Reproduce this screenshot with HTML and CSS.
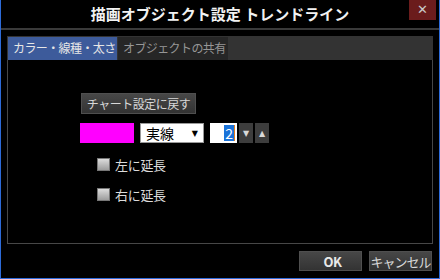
FILE: index.html
```html
<!DOCTYPE html>
<html>
<head>
  <meta charset="UTF-8">
  <title>描画オブジェクト設定 トレンドライン</title>
  <link rel="stylesheet" href="styles.css">
</head>
<body>
  <div class="window">
    <div class="titlebar">
      <span class="title">描画オブジェクト設定 トレンドライン</span>
      <button class="close">&#x2715;</button>
    </div>

    <div class="tabs">
      <div class="tab active">カラー・線種・太さ</div>
      <div class="tab">オブジェクトの共有</div>
    </div>

    <div class="panel">
      <button class="btn reset">チャート設定に戻す</button>

      <div class="line-row">
        <div class="swatch"></div>
        <div class="select">
          <span>実線</span>
          <span class="caret">&#9660;</span>
        </div>
        <div class="number"><span class="sel">2</span><span class="cursor"></span></div>
        <button class="spin">&#9660;</button>
        <button class="spin">&#9650;</button>
      </div>

      <label class="check"><span class="box"></span>左に延長</label>
      <label class="check"><span class="box"></span>右に延長</label>
    </div>

    <div class="footer">
      <button class="btn ok">OK</button>
      <button class="btn cancel">キャンセル</button>
    </div>
  </div>
</body>
</html>
```

FILE: styles.css
```css
body {
  margin: 0;
  background: #000;
  font-family: "Noto Sans CJK JP", "Noto Sans", sans-serif;
}

.window {
  width: 440px;
  height: 279px;
  box-sizing: border-box;
  background: #000;
  border: 1px solid #2d6bd9;
  border-top: none;
  position: relative;
}

.titlebar {
  height: 28px;
  border-bottom: 2px solid #3a3a3a;
  display: flex;
  align-items: center;
  justify-content: center;
}

.title {
  color: #f2f2f2;
  font-weight: bold;
  font-size: 15px;
  margin-top: -1px;
}

.close {
  position: absolute;
  top: 0;
  right: 3px;
  width: 27px;
  height: 20px;
  border: none;
  padding: 0;
  background: #6b1c1c;
  color: #c9c9c9;
  font-size: 13px;
  line-height: 20px;
  font-family: "DejaVu Sans", sans-serif;
}

.tabs {
  margin: 6px 6px 0 6px;
  height: 24px;
  background: #333;
  display: flex;
  align-items: flex-end;
  padding-left: 1px;
}

.tab {
  height: 23px;
  line-height: 22px;
  font-size: 12px;
  letter-spacing: -0.6px;
  color: #969696;
  background: #262626;
  width: 110px;
  box-sizing: border-box;
  padding-left: 5px;
  margin-right: 1px;
}

.tab.active {
  width: 109px;
  background: #3d5b9b;
  color: #e6e6e6;
}

.panel {
  margin: 0 6px;
  height: 184px;
  box-sizing: border-box;
  border: 1px solid #474747;
  border-top: none;
  padding: 33px 0 0 72px;
}

.btn {
  font-family: inherit;
  font-size: 12px;
  color: #d8d8d8;
  background: linear-gradient(#474747, #333);
  border: 1px solid #4f4f4f;
  padding: 0;
  letter-spacing: -0.5px;
}

.reset {
  width: 115px;
  height: 21px;
  margin-left: 1px;
  display: block;
}

.line-row {
  display: flex;
  align-items: center;
  height: 20px;
  margin-top: 9px;
}

.swatch {
  width: 54px;
  height: 20px;
  background: #ff00ff;
}

.select {
  margin-left: 6px;
  width: 64px;
  height: 20px;
  box-sizing: border-box;
  background: #fff;
  border: 1px solid #9a9a9a;
  display: flex;
  align-items: center;
  justify-content: space-between;
  padding: 0 5px 0 5px;
  font-size: 14px;
  color: #000;
}

.caret {
  font-size: 8px;
  font-family: "DejaVu Sans", sans-serif;
}

.number {
  margin-left: 6px;
  width: 27px;
  height: 20px;
  background: #fff;
  display: flex;
  align-items: center;
  justify-content: flex-end;
  padding-right: 2px;
  box-sizing: border-box;
}

.sel {
  background: #1a73d9;
  color: #fff;
  font-size: 14px;
  line-height: 16px;
  padding: 0 1px;
}

.cursor {
  width: 1px;
  height: 16px;
  background: #e07a1a;
}

.spin {
  margin-left: 2px;
  width: 14px;
  height: 20px;
  border: none;
  padding: 0;
  background: #3d3d3d;
  color: #d8d8d8;
  font-size: 8px;
  font-family: "DejaVu Sans", sans-serif;
}

.check {
  display: flex;
  align-items: center;
  margin-left: 17px;
  height: 16px;
  font-size: 13px;
  color: #dcdcdc;
  letter-spacing: -0.3px;
}

.line-row + .check {
  margin-top: 13px;
}

.check + .check {
  margin-top: 14px;
}

.box {
  width: 13px;
  height: 13px;
  box-sizing: border-box;
  background: linear-gradient(#dcdcdc, #9c9c9c);
  border: 1px solid #777;
  margin-right: 5px;
}

.footer {
  display: flex;
  justify-content: flex-end;
  gap: 7px;
  padding: 7px 7px 0 0;
}

.ok {
  width: 63px;
  height: 20px;
  font-weight: bold;
  font-size: 13px;
  color: #e8e8e8;
  padding-left: 4px;
}

.cancel {
  width: 63px;
  height: 20px;
  font-size: 13px;
  letter-spacing: -1px;
}
```
